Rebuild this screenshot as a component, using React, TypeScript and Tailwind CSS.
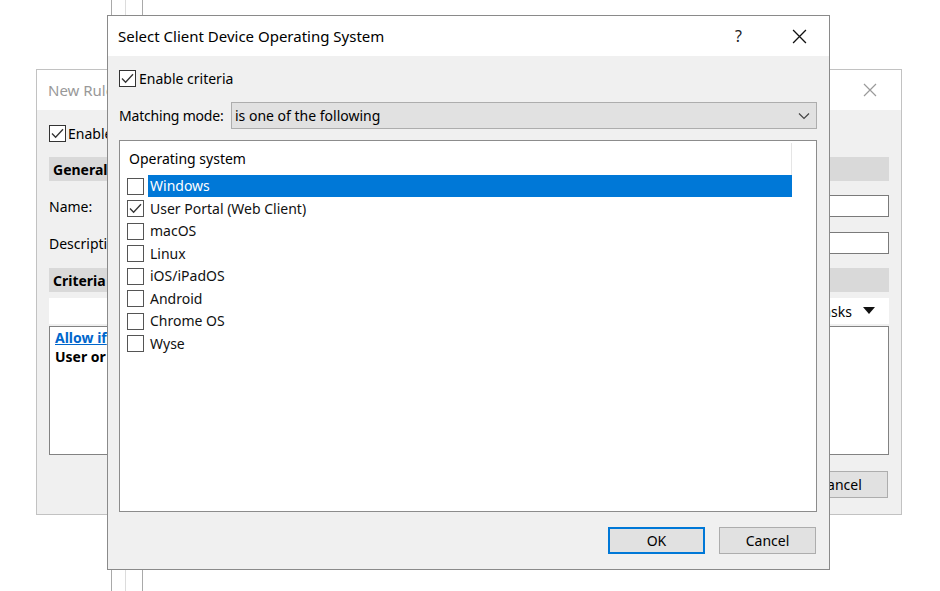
import React from 'react'

const FONT = "font-['Noto_Sans','Open_Sans',sans-serif]"

function CheckBox({ checked, dim }: { checked?: boolean; dim?: boolean }) {
  return (
    <span
      className={`flex h-[17px] w-[17px] shrink-0 items-center justify-center border bg-white ${
        dim ? 'border-[#555]' : 'border-[#333]'
      }`}
    >
      {checked && (
        <svg width="13" height="11" viewBox="0 0 13 11" fill="none">
          <path d="M1 5.5 L4.6 9.2 L12 1.2" stroke="#333" strokeWidth="1.3" />
        </svg>
      )}
    </span>
  )
}

function CloseX({ color, size }: { color: string; size: number }) {
  return (
    <svg width={size} height={size} viewBox="0 0 14 14" fill="none">
      <path d="M1 1 L13 13 M13 1 L1 13" stroke={color} strokeWidth="1.2" />
    </svg>
  )
}

// the window that sits behind the dialog
function BackWindow() {
  return (
    <div className="absolute left-[36px] top-[69px] flex h-[446px] w-[866px] flex-col border border-[#c2c2c2] bg-[#f0f0f0] text-[14px] leading-[17px]">
      <div className="flex h-[40px] shrink-0 items-center justify-between bg-white pl-[11px] pr-[24px]">
        <span className="text-[15px] text-[#999]">New Rule</span>
        <CloseX color="#9a9a9a" size={14} />
      </div>
      <div className="flex flex-1 flex-col px-[12px]">
        <label className="mt-[15px] flex h-[17px] items-center gap-[2px]">
          <CheckBox checked />
          <span>Enable rule</span>
        </label>
        <div className="mt-[15px] flex h-[24px] items-center bg-[#d9d9d9] px-[4px] font-bold">General</div>
        <div className="mt-[14px] flex h-[22px] items-center">
          <span className="w-[100px]">Name:</span>
          <div className="h-[22px] flex-1 border border-[#7a7a7a] bg-white" />
        </div>
        <div className="mt-[15px] flex h-[22px] items-center">
          <span className="w-[100px]">Description:</span>
          <div className="h-[22px] flex-1 border border-[#7a7a7a] bg-white" />
        </div>
        <div className="mt-[14px] flex h-[24px] items-center bg-[#d9d9d9] px-[4px] font-bold">Criteria</div>
        <div className="mt-[6px] flex h-[26px] items-center justify-end gap-[11px] bg-white pr-[14px]">
          <span>Tasks</span>
          <svg width="12" height="8" viewBox="0 0 12 8">
            <path d="M0 0 H12 L6 7 Z" fill="#111" />
          </svg>
        </div>
        <div className="mt-[2px] h-[129px] border border-[#828282] bg-white px-[5px] pt-[1px] font-bold leading-[19px]">
          <div className="text-[#0066cc] underline">Allow if</div>
          <div>User or</div>
        </div>
        <div className="mt-[16px] flex justify-end gap-[14px] pr-[1px]">
          <button className="h-[27px] w-[96px] border border-[#adadad] bg-[#e1e1e1]">OK</button>
          <button className="h-[27px] w-[96px] border border-[#adadad] bg-[#e1e1e1]">Cancel</button>
        </div>
      </div>
    </div>
  )
}

const systems = ['Windows', 'User Portal (Web Client)', 'macOS', 'Linux', 'iOS/iPadOS', 'Android', 'Chrome OS', 'Wyse']

function FrontDialog() {
  return (
    <div className="absolute left-[107px] top-[15px] flex h-[555px] w-[723px] flex-col border border-[#8a8a8a] bg-[#f0f0f0] text-[14px] leading-[17px]">
      <div className="flex h-[40px] shrink-0 items-center bg-white pl-[10px]">
        <span className="flex-1 text-[15px] text-black">Select Client Device Operating System</span>
        <span className="mr-[50px] text-[16px] text-[#222]">?</span>
        <span className="mr-[22px]">
          <CloseX color="#111" size={15} />
        </span>
      </div>
      <div className="flex flex-1 flex-col pl-[11px] pr-[12px]">
        <label className="mt-[14px] flex h-[17px] items-center gap-[3px]">
          <CheckBox checked />
          <span>Enable criteria</span>
        </label>
        <div className="mt-[15px] flex h-[27px] items-center">
          <span className="w-[112px] tracking-[-0.2px]">Matching mode:</span>
          <div className="flex h-[27px] flex-1 items-center justify-between border border-[#adadad] bg-[#e1e1e1] pl-[3px] pr-[6px]">
            <span>is one of the following</span>
            <svg width="12" height="8" viewBox="0 0 12 8" fill="none">
              <path d="M1 1.5 L6 6.5 L11 1.5" stroke="#444" strokeWidth="1.2" />
            </svg>
          </div>
        </div>
        <div className="mt-[11px] flex h-[372px] flex-col border border-[#8c8c8c] bg-white">
          <div className="flex h-[34px] shrink-0 items-center">
            <span className="flex-1 pl-[9px]">Operating system</span>
            <span className="mt-[2px] h-[32px] w-px bg-[#e5e5e5]" />
            <span className="w-[24px]" />
          </div>
          {systems.map((s, i) => (
            <div key={s} className="flex h-[22.5px] items-center pl-[7px] pr-[24px]">
              <CheckBox checked={i === 1} dim />
              <span
                className={`ml-[4px] flex h-[22px] flex-1 items-center pl-[2px] leading-[16px] ${
                  i === 0 ? 'bg-[#0078d7] text-white' : 'text-[#111]'
                }`}
              >
                {s}
              </span>
            </div>
          ))}
        </div>
        <div className="mt-[15px] flex justify-end gap-[14px] pr-[1px]">
          <button className="h-[27px] w-[97px] border-2 border-[#0078d7] bg-[#e1e1e1]">OK</button>
          <button className="h-[27px] w-[97px] border border-[#adadad] bg-[#e1e1e1]">Cancel</button>
        </div>
      </div>
    </div>
  )
}

export default function App() {
  return (
    <div className={`relative h-[591px] w-[940px] overflow-hidden bg-white text-black ${FONT}`}>
      {/* edges of another window further back */}
      <div className="absolute left-[111px] top-0 h-full w-px bg-[#a9a9a9]" />
      <div className="absolute left-[125px] top-0 h-full w-px bg-[#dcdcdc]" />
      <div className="absolute left-[142px] top-0 h-full w-px bg-[#a9a9a9]" />
      <BackWindow />
      <FrontDialog />
    </div>
  )
}
